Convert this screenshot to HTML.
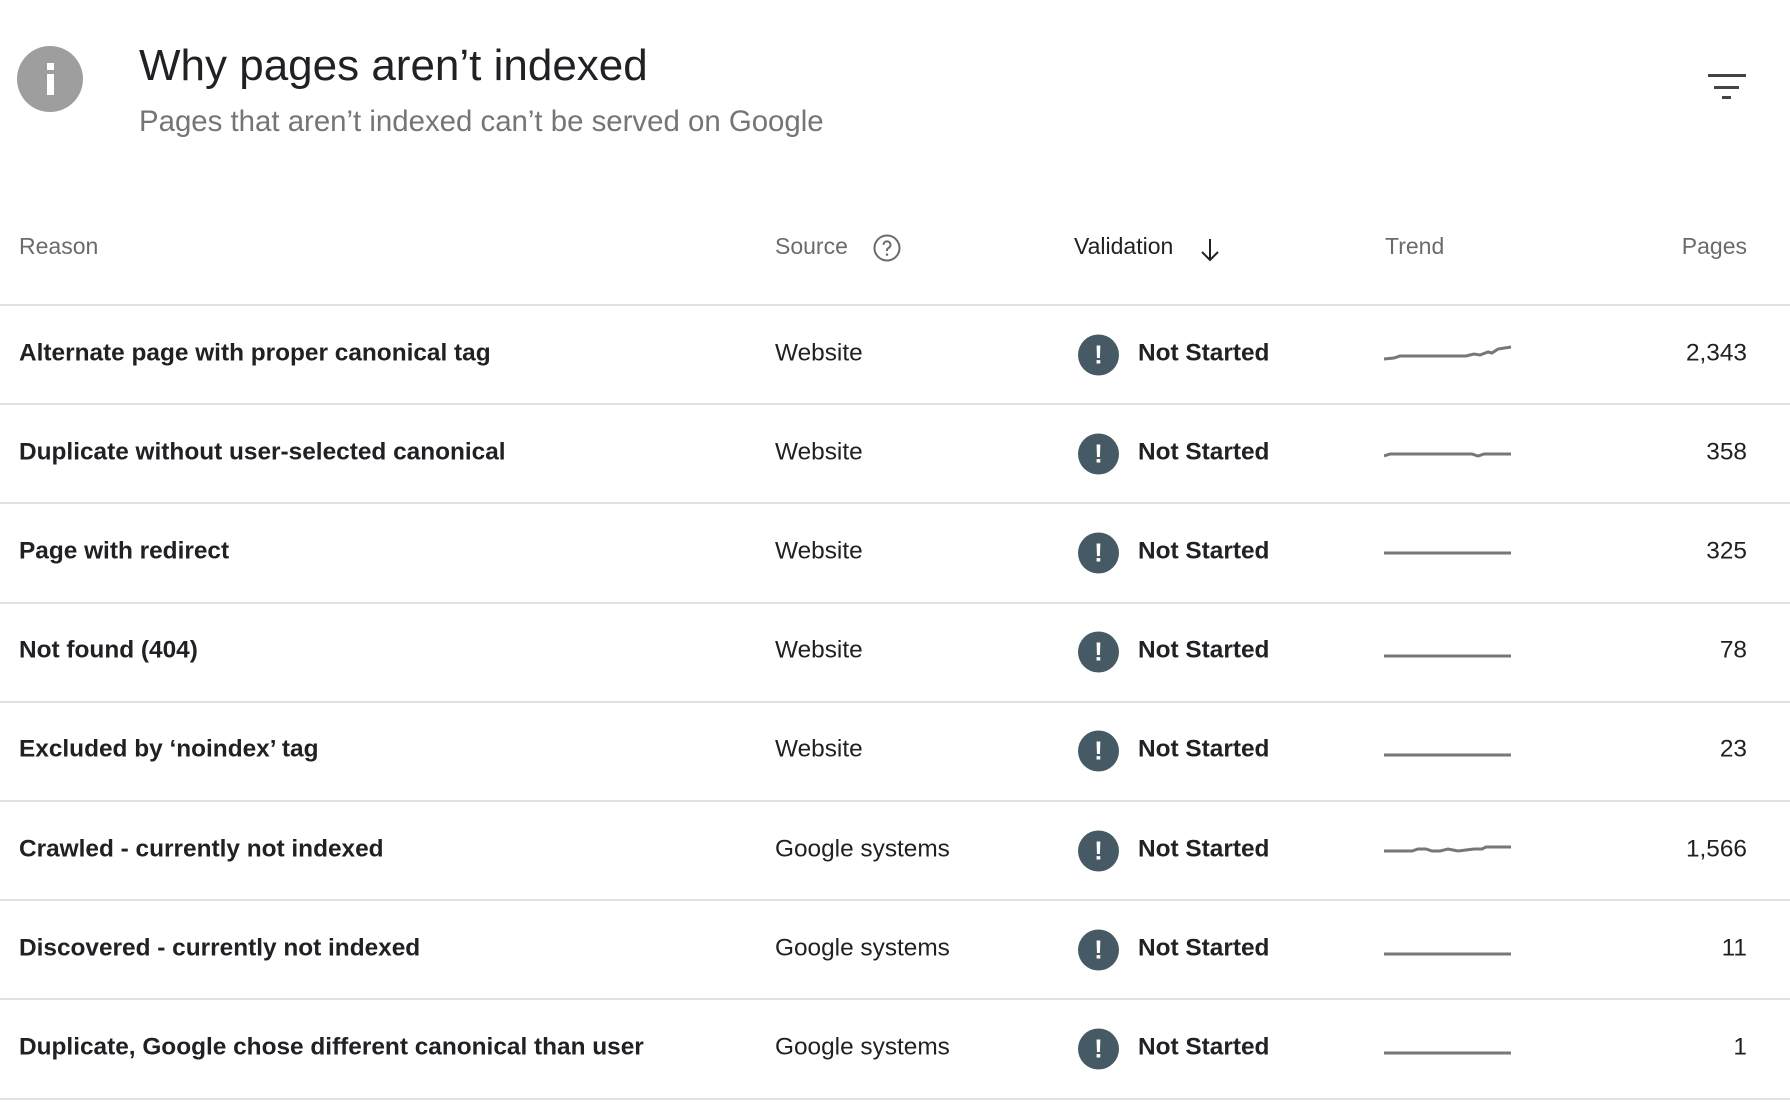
<!DOCTYPE html>
<html><head><meta charset="utf-8"><style>
body{margin:0;width:1790px;height:1106px;background:#fff;font-family:"Liberation Sans",Roboto,sans-serif;position:relative;overflow:hidden}
.a{position:absolute;white-space:nowrap}
.hd{font-size:23px;color:#6b6b6b;top:233px}
.row{position:absolute;left:0;width:1790px;height:97.2px;border-bottom:2px solid #e0e0e0}
.row .a{top:50%;transform:translateY(-50%)}
.row .txt{transform:translateY(-56%)}
.r{left:19px;font-size:24.4px;font-weight:bold;color:#202124}
.s{left:775px;font-size:24.4px;color:#202124}
.v{left:1138px;font-size:24.4px;font-weight:bold;color:#202124}
.p{right:43px;font-size:24.4px;color:#202124}
.ic{left:1078px;width:41px;height:41px;border-radius:50%;background:#455a64;color:#fff;font-weight:bold;font-size:26px;text-align:center;line-height:41px}
.t{left:1384px}
</style></head><body>
<div class="a" style="left:17px;top:46px;width:66px;height:66px;border-radius:50%;background:#9e9e9e"></div>
<div class="a" style="left:47px;top:63px;width:7px;height:7px;background:#fff"></div>
<div class="a" style="left:47px;top:74px;width:7px;height:21px;background:#fff"></div>
<div class="a" style="left:139px;top:41px;font-size:44px;color:#202124">Why pages aren’t indexed</div>
<div class="a" style="left:139px;top:105px;font-size:29.4px;color:#757575">Pages that aren’t indexed can’t be served on Google</div>
<div class="a" style="left:1708px;top:74px;width:38px;height:3px;background:#444"></div>
<div class="a" style="left:1714px;top:86px;width:25px;height:3px;background:#444"></div>
<div class="a" style="left:1722px;top:96px;width:9px;height:3px;background:#444"></div>

<div class="a hd" style="left:19px">Reason</div>
<div class="a hd" style="left:775px">Source</div>
<svg class="a" style="left:872px;top:233px" width="30" height="30" viewBox="0 0 24 24"><circle cx="12" cy="12" r="10" fill="none" stroke="#6b6b6b" stroke-width="1.6"/><path d="M9.2 9.5a2.8 2.8 0 1 1 4 2.5c-.8.4-1.2 1-1.2 1.8v.6" fill="none" stroke="#6b6b6b" stroke-width="1.6"/><circle cx="12" cy="17.3" r="1" fill="#6b6b6b"/></svg>
<div class="a hd" style="left:1074px;color:#202124">Validation</div>
<svg class="a" style="left:1198px;top:237px" width="24" height="26" viewBox="0 0 24 26"><path d="M12 2v21M4 15l8 8 8-8" fill="none" stroke="#202124" stroke-width="2"/></svg>
<div class="a hd" style="left:1385px">Trend</div>
<div class="a hd" style="right:43px">Pages</div>
<div class="a" style="left:0;top:304px;width:1790px;height:2px;background:#e0e0e0"></div>

<div class="row" style="top:306px"><div class="a r txt">Alternate page with proper canonical tag</div><div class="a s txt">Website</div><div class="a ic">!</div><div class="a v txt">Not Started</div><svg class="a t" width="128" height="20" viewBox="0 0 128 20"><polyline points="0,14 10,13 16,11 82,11 90,9 96,10 104,7 108,8 114,4 127,2" fill="none" stroke="#777" stroke-width="3"/></svg><div class="a p txt">2,343</div></div>
<div class="row" style="top:405.2px"><div class="a r txt">Duplicate without user-selected canonical</div><div class="a s txt">Website</div><div class="a ic">!</div><div class="a v txt">Not Started</div><svg class="a t" width="128" height="20" viewBox="0 0 128 20"><polyline points="0,12 6,10 88,10 94,12 100,10 127,10" fill="none" stroke="#777" stroke-width="3"/></svg><div class="a p txt">358</div></div>
<div class="row" style="top:504.4px"><div class="a r txt">Page with redirect</div><div class="a s txt">Website</div><div class="a ic">!</div><div class="a v txt">Not Started</div><svg class="a t" width="128" height="20" viewBox="0 0 128 20"><polyline points="0,10 127,10" fill="none" stroke="#777" stroke-width="3"/></svg><div class="a p txt">325</div></div>
<div class="row" style="top:603.6px"><div class="a r txt">Not found (404)</div><div class="a s txt">Website</div><div class="a ic">!</div><div class="a v txt">Not Started</div><svg class="a t" width="128" height="20" viewBox="0 0 128 20"><polyline points="0,14 127,14" fill="none" stroke="#777" stroke-width="3"/></svg><div class="a p txt">78</div></div>
<div class="row" style="top:702.8px"><div class="a r txt">Excluded by ‘noindex’ tag</div><div class="a s txt">Website</div><div class="a ic">!</div><div class="a v txt">Not Started</div><svg class="a t" width="128" height="20" viewBox="0 0 128 20"><polyline points="0,14 127,14" fill="none" stroke="#777" stroke-width="3"/></svg><div class="a p txt">23</div></div>
<div class="row" style="top:802px"><div class="a r txt">Crawled - currently not indexed</div><div class="a s txt">Google systems</div><div class="a ic">!</div><div class="a v txt">Not Started</div><svg class="a t" width="128" height="20" viewBox="0 0 128 20"><polyline points="0,10 28,10 34,8 42,8 48,10 56,10 64,8 74,10 90,8 98,8 102,6 127,6" fill="none" stroke="#777" stroke-width="3"/></svg><div class="a p txt">1,566</div></div>
<div class="row" style="top:901.2px"><div class="a r txt">Discovered - currently not indexed</div><div class="a s txt">Google systems</div><div class="a ic">!</div><div class="a v txt">Not Started</div><svg class="a t" width="128" height="20" viewBox="0 0 128 20"><polyline points="0,14 127,14" fill="none" stroke="#777" stroke-width="3"/></svg><div class="a p txt">11</div></div>
<div class="row" style="top:1000.4px"><div class="a r txt">Duplicate, Google chose different canonical than user</div><div class="a s txt">Google systems</div><div class="a ic">!</div><div class="a v txt">Not Started</div><svg class="a t" width="128" height="20" viewBox="0 0 128 20"><polyline points="0,14 127,14" fill="none" stroke="#777" stroke-width="3"/></svg><div class="a p txt">1</div></div>
</body></html>
